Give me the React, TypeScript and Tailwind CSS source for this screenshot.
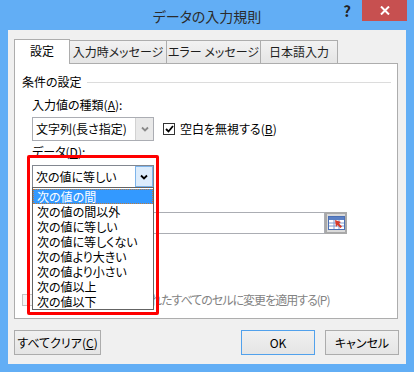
import React from "react";

const items = [
  "次の値の間",
  "次の値の間以外",
  "次の値に等しい",
  "次の値に等しくない",
  "次の値より大きい",
  "次の値より小さい",
  "次の値以上",
  "次の値以下",
];

function Chevron({ color }: { color: string }) {
  return (
    <svg width="8" height="6" viewBox="0 0 8 6">
      <polyline points="1,1.5 4,4.5 7,1.5" fill="none" stroke={color} strokeWidth="1.8" />
    </svg>
  );
}

function Tab({ label, selected, w }: { label: string; selected?: boolean; w: string }) {
  return selected ? (
    <div className={`${w} h-[25px] -mb-px z-10 bg-white border border-b-0 border-[#adadad] flex items-center justify-center text-black pb-[2px]`}>
      {label}
    </div>
  ) : (
    <div className={`${w} h-[23px] bg-gradient-to-b from-[#f2f2f2] to-[#e5e5e5] border border-l-0 border-b-0 border-[#adadad] flex items-center justify-center text-[#1e1e1e]`}>
      {label}
    </div>
  );
}

function RefIcon() {
  return (
    <svg width="17" height="14" viewBox="0 0 17 14">
      <rect x="0.5" y="0.5" width="16" height="13" fill="#ffffff" stroke="#4b6fb3" />
      <rect x="1" y="1" width="15" height="3" fill="#5b80c4" />
      <line x1="1" y1="7" x2="16" y2="7" stroke="#7f9bd0" />
      <line x1="1" y1="10" x2="16" y2="10" stroke="#7f9bd0" />
      <line x1="6" y1="4" x2="6" y2="13" stroke="#7f9bd0" />
      <line x1="11" y1="4" x2="11" y2="13" stroke="#7f9bd0" />
      <polygon points="7,4 13,6 11,7.5 14,10.5 12.5,12 9.5,9 8,11" fill="#d83a2a" />
    </svg>
  );
}

export default function App() {
  return (
    <div className="relative w-[414px] h-[372px] bg-[#62aef5] flex flex-col text-[12px] text-black font-['Noto_Sans_CJK_JP',sans-serif] [font-feature-settings:'palt'] overflow-hidden">
      {/* Title bar */}
      <div className="h-[30px] grid grid-cols-[1fr_auto_1fr]">
        <div />
        <div className="pt-[5px] text-[14px] leading-[22px] text-[#2b2b2b]">データの入力規則</div>
        <div className="flex justify-end items-start pr-[7px]">
          <span className="mt-[2px] mr-[11px] text-[15px] leading-[18px] font-bold text-[#222]">?</span>
          <div className="w-[45px] h-[21px] bg-[#c75050] flex items-center justify-center">
            <svg width="10" height="9" viewBox="0 0 10 9">
              <path d="M1 0.5 L9 8.5 M9 0.5 L1 8.5" stroke="#ffffff" strokeWidth="2" />
            </svg>
          </div>
        </div>
      </div>

      {/* Client area */}
      <div className="mx-[8px] h-[334px] bg-[#f0f0f0] pl-[6px] pr-[7px] pt-[9px] flex flex-col">
        <div className="flex items-end h-[24px]">
          <Tab label="設定" selected w="w-[56px]" />
          <Tab label="入力時メッセージ" w="w-[97px]" />
          <Tab label="エラー メッセージ" w="w-[94px]" />
          <Tab label="日本語入力" w="w-[77px]" />
        </div>

        {/* Panel */}
        <div className="w-[384px] h-[256px] bg-white border border-[#adadad] flex flex-col pt-[10px]">
          <div className="flex items-center pl-[7px] pr-[6px] h-[16px]">
            <span className="leading-[16px]">条件の設定</span>
            <div className="flex-1 h-px bg-[#dcdcdc] ml-[5px]" />
          </div>

          <div className="pl-[17px] flex flex-col">
            <div className="mt-[7px] leading-[16px]">
              入力値の種類(<span className="underline">A</span>):
            </div>
            <div className="mt-[4px] flex items-center">
              <div className="w-[122px] h-[24px] border border-[#abadb3] bg-white flex">
                <div className="flex-1 pl-[3px] flex items-center">文字列(長さ指定)</div>
                <div className="w-[18px] bg-[#e9e9e9] border-l border-[#d2d2d2] flex items-center justify-center">
                  <Chevron color="#8a8a8a" />
                </div>
              </div>
              <div className="ml-[9px] w-[12px] h-[12px] border border-[#333] bg-white flex items-center justify-center">
                <svg width="9" height="8" viewBox="0 0 9 8">
                  <polyline points="1,4 3.5,6.5 8,1" fill="none" stroke="#000" strokeWidth="1.8" />
                </svg>
              </div>
              <span className="ml-[5px]">
                空白を無視する(<span className="underline">B</span>)
              </span>
            </div>
            <div className="mt-[3px] leading-[16px]">
              データ(<span className="underline">D</span>):
            </div>
            <div className="mt-[5px] w-[122px] h-[23px] border border-[#828790] bg-white flex">
              <div className="flex-1 pl-[3px] flex items-center">次の値に等しい</div>
              <div className="w-[18px] bg-[#dcecfc] border border-[#7eb4ea] flex items-center justify-center">
                <Chevron color="#000" />
              </div>
            </div>
            {/* value input, mostly hidden behind the open list */}
            <div className="mt-[24px] flex h-[22px]">
              <div className="w-[293px] border border-[#abadb3] bg-white" />
              <div className="w-[22px] bg-[#dadada] border-2 border-[#a9a9a9] flex items-center justify-center">
                <RefIcon />
              </div>
            </div>
          </div>

          <div className="mt-[58px] pl-[7px] flex items-center h-[16px] text-[#838383]">
            <div className="w-[12px] h-[12px] border border-[#c4c4c4] bg-[#f4f4f4]" />
            <span className="ml-[116px] tracking-[-1px]">れたすべてのセルに変更を適用する(P)</span>
          </div>
        </div>

        {/* Buttons */}
        <div className="mt-[11px] flex h-[25px]">
          <button className="w-[87px] h-[25px] border border-[#acacac] bg-gradient-to-b from-[#f0f0f0] to-[#e5e5e5]">
            すべてクリア(<span className="underline">C</span>)
          </button>
          <button className="ml-auto w-[74px] h-[25px] border border-[#51a1ec] bg-gradient-to-b from-[#f0f0f0] to-[#e5e5e5]">
            OK
          </button>
          <button className="ml-[10px] w-[74px] h-[25px] border border-[#acacac] bg-gradient-to-b from-[#f0f0f0] to-[#e5e5e5]">
            キャンセル
          </button>
        </div>
      </div>

      {/* Open dropdown list */}
      <div className="absolute left-[32px] top-[187px] w-[122px] h-[123px] bg-white border border-[#646464] flex flex-col pt-px">
        {items.map((t, i) => (
          <div
            key={t}
            className={
              i === 0
                ? "h-[15px] leading-[13px] pl-[3px] bg-[#3399ff] text-white border border-dotted border-[#c07a3a]"
                : "h-[15px] leading-[15px] pl-[4px]"
            }
          >
            {t}
          </div>
        ))}
      </div>

      {/* Red highlight */}
      <div className="absolute left-[27px] top-[155px] w-[132px] h-[160px] border-[3px] border-[#ff0000] rounded-[2px]" />
    </div>
  );
}
